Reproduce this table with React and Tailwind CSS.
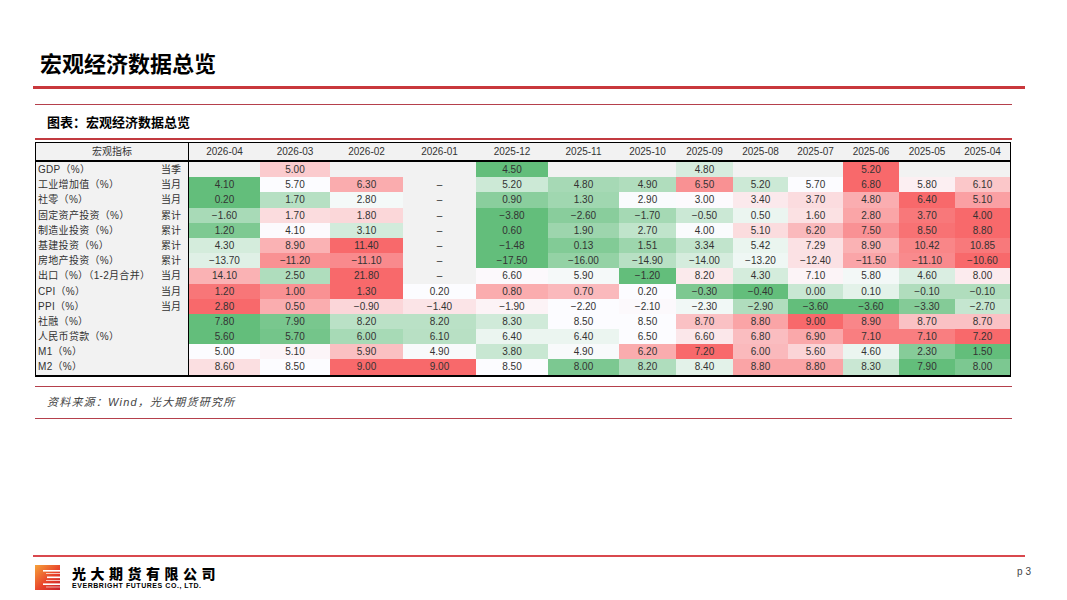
import React from "react";

const cols = ["2026-04", "2026-03", "2026-02", "2026-01", "2025-12", "2025-11", "2025-10", "2025-09", "2025-08", "2025-07", "2025-06", "2025-05", "2025-04"];

const D = "-"; // no data this month
const rows = [
  { name: "GDP（%）", unit: "当季", v: [null, 5.0, null, null, 4.5, null, null, 4.8, null, null, 5.2, null, null] },
  { name: "工业增加值（%）", unit: "当月", v: [4.1, 5.7, 6.3, D, 5.2, 4.8, 4.9, 6.5, 5.2, 5.7, 6.8, 5.8, 6.1] },
  { name: "社零（%）", unit: "当月", v: [0.2, 1.7, 2.8, D, 0.9, 1.3, 2.9, 3.0, 3.4, 3.7, 4.8, 6.4, 5.1] },
  { name: "固定资产投资（%）", unit: "累计", v: [-1.6, 1.7, 1.8, D, -3.8, -2.6, -1.7, -0.5, 0.5, 1.6, 2.8, 3.7, 4.0] },
  { name: "制造业投资（%）", unit: "累计", v: [1.2, 4.1, 3.1, D, 0.6, 1.9, 2.7, 4.0, 5.1, 6.2, 7.5, 8.5, 8.8] },
  { name: "基建投资（%）", unit: "累计", v: [4.3, 8.9, 11.4, D, -1.48, 0.13, 1.51, 3.34, 5.42, 7.29, 8.9, 10.42, 10.85] },
  { name: "房地产投资（%）", unit: "累计", v: [-13.7, -11.2, -11.1, D, -17.5, -16.0, -14.9, -14.0, -13.2, -12.4, -11.5, -11.1, -10.6] },
  { name: "出口（%）（1-2月合并）", unit: "当月", v: [14.1, 2.5, 21.8, D, 6.6, 5.9, -1.2, 8.2, 4.3, 7.1, 5.8, 4.6, 8.0] },
  { name: "CPI（%）", unit: "当月", v: [1.2, 1.0, 1.3, 0.2, 0.8, 0.7, 0.2, -0.3, -0.4, 0.0, 0.1, -0.1, -0.1] },
  { name: "PPI（%）", unit: "当月", v: [2.8, 0.5, -0.9, -1.4, -1.9, -2.2, -2.1, -2.3, -2.9, -3.6, -3.6, -3.3, -2.7] },
  { name: "社融（%）", unit: "", v: [7.8, 7.9, 8.2, 8.2, 8.3, 8.5, 8.5, 8.7, 8.8, 9.0, 8.9, 8.7, 8.7] },
  { name: "人民币贷款（%）", unit: "", v: [5.6, 5.7, 6.0, 6.1, 6.4, 6.4, 6.5, 6.6, 6.8, 6.9, 7.1, 7.1, 7.2] },
  { name: "M1（%）", unit: "", v: [5.0, 5.1, 5.9, 4.9, 3.8, 4.9, 6.2, 7.2, 6.0, 5.6, 4.6, 2.3, 1.5] },
  { name: "M2（%）", unit: "", v: [8.6, 8.5, 9.0, 9.0, 8.5, 8.0, 8.2, 8.4, 8.8, 8.8, 8.3, 7.9, 8.0] },
];

// excel style 3-colour scale, per row: min green, median white, max red
const GREEN = [99, 190, 123];
const WHITE = [252, 252, 255];
const RED = [248, 105, 107];

function mix(a, b, t) {
  return `rgb(${a.map((x, i) => Math.round(x + (b[i] - x) * t)).join(",")})`;
}

function scaleFor(values) {
  const nums = values.filter((x) => typeof x === "number").sort((a, b) => a - b);
  const n = nums.length;
  const mid = n % 2 ? nums[(n - 1) / 2] : (nums[n / 2 - 1] + nums[n / 2]) / 2;
  const lo = nums[0];
  const hi = nums[n - 1];
  return (x) => {
    if (x <= mid) return mix(WHITE, GREEN, mid === lo ? 0 : (mid - x) / (mid - lo));
    return mix(WHITE, RED, hi === mid ? 0 : (x - mid) / (hi - mid));
  };
}

function fmt(x) {
  if (x === D) return "–";
  if (x === null) return "";
  return (x < 0 ? "−" : "") + Math.abs(x).toFixed(2);
}

const grid = "grid grid-cols-[153px_71px_70px_73px_73px_72px_71px_57px_57px_55px_55px_56px_56px_55px]";

function Logo() {
  return (
    <svg width="25" height="25" viewBox="0 0 25 25">
      <defs>
        <linearGradient id="eb" x1="0" y1="0" x2="1" y2="1">
          <stop offset="0" stopColor="#f6a23a" />
          <stop offset="0.55" stopColor="#e8452c" />
          <stop offset="1" stopColor="#c91f2b" />
        </linearGradient>
      </defs>
      <rect x="0" y="0" width="25" height="25" fill="url(#eb)" />
      <rect x="8" y="5" width="17" height="1.6" fill="#fff" />
      <rect x="11" y="8" width="14" height="1" fill="#fff" opacity="0.7" />
      <rect x="12" y="11.5" width="13" height="1.6" fill="#fff" />
      <rect x="11" y="15" width="14" height="1" fill="#fff" opacity="0.7" />
      <rect x="8" y="18.4" width="17" height="1.6" fill="#fff" />
      <rect x="11" y="21.5" width="14" height="1" fill="#fff" opacity="0.6" />
    </svg>
  );
}

export default function App() {
  return (
    <div className="w-[1067px] h-[600px] bg-white flex flex-col text-[#222] font-['Liberation_Sans','Noto_Sans_CJK_SC',sans-serif]">
      <div className="h-[86px] pl-[40px] pt-[47px]">
        <div className="text-[22px] leading-[30px] font-bold font-['Noto_Sans_CJK_SC',sans-serif] text-black">宏观经济数据总览</div>
      </div>
      <div className="ml-[33px] w-[992px] h-[3px] bg-[#c9383c]" />
      <div className="mt-[15px] ml-[35px] w-[977px] h-px bg-[#b5404c]" />
      <div className="h-[33px] pl-[47px] flex items-center">
        <span className="text-[13px] font-bold font-['Noto_Sans_CJK_SC',sans-serif] text-black">图表：宏观经济数据总览</span>
      </div>
      <div className="ml-[35px] w-[977px] h-[2px] bg-[#c23a40]" />

      <div className="mt-[2px] ml-[35px] w-[976px] bg-[#f2f2f2] border-x border-t border-b-2 border-black text-[10px]">
        <div className={`${grid} h-[19px] border-b-2 border-black items-center text-[#333]`}>
          <div className="h-full flex items-center justify-center border-r border-black">宏观指标</div>
          {cols.map((c) => (
            <div key={c} className="text-center">{c}</div>
          ))}
        </div>
        {rows.map((r) => {
          const color = scaleFor(r.v);
          return (
            <div key={r.name} className={`${grid} h-[15.2px] leading-[15.2px]`}>
              <div className="flex justify-between pl-[2px] pr-[7px] border-r border-black text-[#333] whitespace-nowrap">
                <span className="tracking-[0.3px]">{r.name}</span>
                <span>{r.unit}</span>
              </div>
              {r.v.map((x, i) => (
                <div
                  key={i}
                  className="text-center text-[#333]"
                  style={typeof x === "number" ? { backgroundColor: color(x) } : undefined}
                >
                  {fmt(x)}
                </div>
              ))}
            </div>
          );
        })}
      </div>

      <div className="mt-[9px] ml-[35px] w-[977px] h-px bg-[#b5404c]" />
      <div className="h-[31px] pl-[47px] flex items-center">
        <span className="text-[11px] italic tracking-[1.2px] text-[#444]">资料来源：Wind，光大期货研究所</span>
      </div>
      <div className="ml-[35px] w-[977px] h-px bg-[#b5404c]" />

      <div className="mt-auto h-[45px] flex flex-col">
        <div className="ml-[33px] w-[992px] h-[2px] bg-[#d9484d]" />
        <div className="mt-[8px] pl-[35px] pr-[36px] flex items-start justify-between">
          <div className="flex items-center gap-[12px]">
            <Logo />
            <div className="flex flex-col">
              <span className="text-[14px] leading-[14px] font-black tracking-[4.5px] text-black font-['Noto_Sans_CJK_SC',sans-serif]">光大期货有限公司</span>
              <span className="mt-[2px] text-[7px] leading-[8px] font-bold tracking-[0.55px] text-black">EVERBRIGHT FUTURES CO., LTD.</span>
            </div>
          </div>
          <span className="text-[10px] leading-[14px] text-[#444]">p 3</span>
        </div>
      </div>
    </div>
  );
}
